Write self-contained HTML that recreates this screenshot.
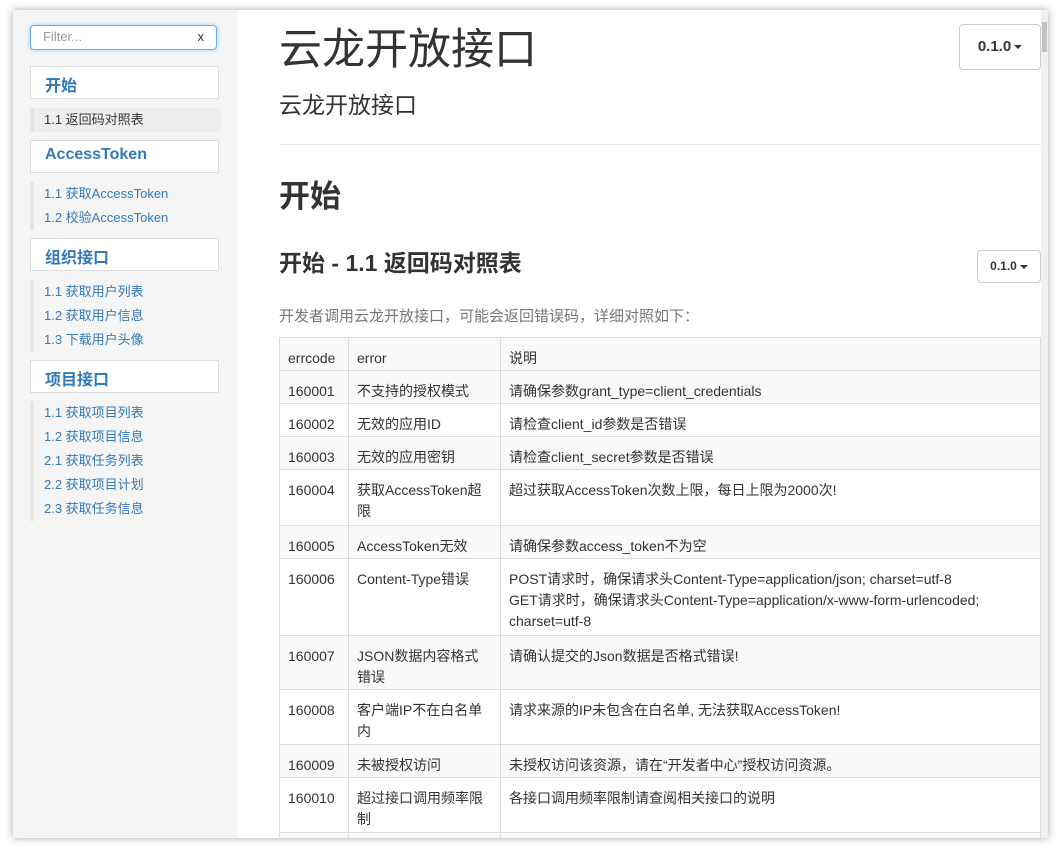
<!DOCTYPE html><html><head><meta charset="utf-8"><style>
*{box-sizing:border-box;margin:0;padding:0}
body{width:1064px;height:858px;background:#fff;position:relative;overflow:hidden;font-family:"Liberation Sans","Noto Sans CJK SC",sans-serif;color:#333}
#win{position:absolute;left:13px;top:10px;width:1035px;height:828px;background:#fff;box-shadow:0 0 8px rgba(0,0,0,.35);overflow:hidden}
#side{position:absolute;left:0;top:0;width:224px;height:828px;background:#f5f5f5}
.abs{position:absolute}
.filter{left:17px;top:15px;width:187px;height:25px;border:1px solid #66afe9;border-radius:4px;background:#fff;box-shadow:0 0 4px rgba(102,175,233,.6);font-size:13px;color:#999;padding:3px 12px}
.filter span{position:absolute;right:12px;top:3px;color:#333}
.sec{left:17px;width:189px;height:33px;border:1px solid #ddd;background:#fff;color:#337ab7;font-weight:bold;font-size:16px;padding:5px 14px}
.list{left:17px;border-left:4px solid #e5e5e5;width:191px}
.list div{height:24px;line-height:24px;font-size:13px;color:#337ab7;padding-left:10px}
.list div.act{background:#eee;color:#333}
.btn{border:1px solid #ccc;border-radius:4px;background:#fff;color:#333;text-align:center}
.caret{display:inline-block;width:0;height:0;border-left:4px solid transparent;border-right:4px solid transparent;border-top:4px solid #333;vertical-align:middle;margin-left:3px}
table{border-collapse:collapse;position:absolute;left:266px;top:327px;width:762px;font-size:14px}
td{border:1px solid #ddd;padding:10px 8px 0;vertical-align:top;line-height:21px}
tr:nth-child(even){background:#f9f9f9}
tr:first-child{background:#f9f9f9}
#sb{position:absolute;left:1028px;top:0;width:7px;height:828px;background:#f1f1f1}
</style></head><body>
<div id="win">
<div id="side">
<div class="abs filter">Filter...<span>x</span></div>
<div class="abs sec" style="top:56px">开始</div>
<div class="abs list" style="top:98px"><div class="act">1.1 返回码对照表</div></div>
<div class="abs sec" style="top:130px">AccessToken</div>
<div class="abs list" style="top:172px"><div>1.1 获取AccessToken</div><div>1.2 校验AccessToken</div></div>
<div class="abs sec" style="top:228px">组织接口</div>
<div class="abs list" style="top:270px"><div>1.1 获取用户列表</div><div>1.2 获取用户信息</div><div>1.3 下载用户头像</div></div>
<div class="abs sec" style="top:350px">项目接口</div>
<div class="abs list" style="top:391px"><div>1.1 获取项目列表</div><div>1.2 获取项目信息</div><div>2.1 获取任务列表</div><div>2.2 获取项目计划</div><div>2.3 获取任务信息</div></div>
</div>
<div class="abs" style="left:266px;top:14px;font-size:43px;color:#333;line-height:52px">云龙开放接口</div>
<div class="abs" style="left:266px;top:80px;font-size:23px;color:#333;line-height:30px">云龙开放接口</div>
<div class="abs btn" style="left:946px;top:14px;width:82px;height:46px;line-height:44px;font-size:15px;font-weight:bold">0.1.0<span class="caret"></span></div>
<div class="abs" style="left:266px;top:134px;width:762px;border-top:1px solid #e5e5e5"></div>
<div class="abs" style="left:266px;top:167px;font-size:31px;font-weight:bold;line-height:40px">开始</div>
<div class="abs" style="left:266px;top:237px;font-size:23px;font-weight:bold;line-height:32px">开始 - 1.1 返回码对照表</div>
<div class="abs btn" style="left:964px;top:240px;width:64px;height:33px;line-height:31px;font-size:12px;font-weight:bold">0.1.0<span class="caret"></span></div>
<div class="abs" style="left:266px;top:296px;font-size:15px;color:#777;line-height:22px">开发者调用云龙开放接口，可能会返回错误码，详细对照如下：</div>
<table>
<colgroup><col style="width:69px"><col style="width:152px"><col></colgroup>
<tr style="height:33px"><td>errcode</td><td>error</td><td>说明</td></tr>
<tr style="height:33px"><td>160001</td><td>不支持的授权模式</td><td>请确保参数grant_type=client_credentials</td></tr>
<tr style="height:33px"><td>160002</td><td>无效的应用ID</td><td>请检查client_id参数是否错误</td></tr>
<tr style="height:33px"><td>160003</td><td>无效的应用密钥</td><td>请检查client_secret参数是否错误</td></tr>
<tr style="height:56px"><td>160004</td><td>获取AccessToken超限</td><td>超过获取AccessToken次数上限，每日上限为2000次!</td></tr>
<tr style="height:33px"><td>160005</td><td>AccessToken无效</td><td>请确保参数access_token不为空</td></tr>
<tr style="height:77px"><td>160006</td><td>Content-Type错误</td><td>POST请求时，确保请求头Content-Type=application/json; charset=utf-8<br>GET请求时，确保请求头Content-Type=application/x-www-form-urlencoded; charset=utf-8</td></tr>
<tr style="height:54px"><td>160007</td><td>JSON数据内容格式错误</td><td>请确认提交的Json数据是否格式错误!</td></tr>
<tr style="height:55px"><td>160008</td><td>客户端IP不在白名单内</td><td>请求来源的IP未包含在白名单, 无法获取AccessToken!</td></tr>
<tr style="height:33px"><td>160009</td><td>未被授权访问</td><td>未授权访问该资源，请在“开发者中心”授权访问资源。</td></tr>
<tr style="height:55px"><td>160010</td><td>超过接口调用频率限制</td><td>各接口调用频率限制请查阅相关接口的说明</td></tr>
<tr style="height:33px"><td>160011</td><td></td><td></td></tr>
</table>
<div id="sb"><div style="margin-top:12px;height:30px;background:#c1c1c1;width:5px;margin-left:1px"></div></div>
</div>
</body></html>
